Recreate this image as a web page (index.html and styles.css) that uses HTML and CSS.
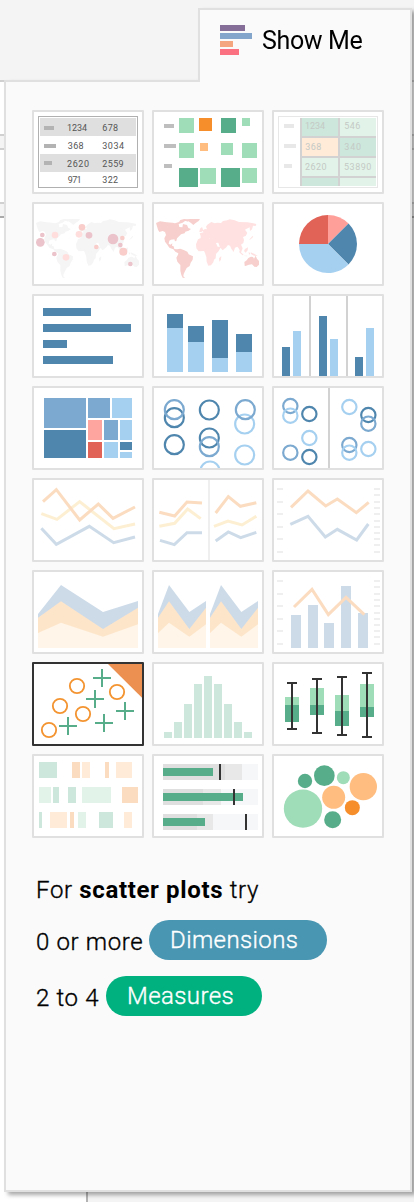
FILE: index.html
```html
<!DOCTYPE html>
<html lang="en">
<head>
<meta charset="utf-8">
<title>Show Me</title>
<link rel="stylesheet" href="styles.css">
</head>
<body>
<div class="backdrop">
  <div class="strip strip-top"></div>
  <div class="strip strip-a"></div>
  <div class="strip strip-b"></div>
  <div class="strip strip-foot"></div>
</div>
<main class="show-me">
  <header class="tab">
    <svg class="logo" viewBox="0 0 32 30"><path fill="#856f98" d="M0 0h25v6H0z"/><path fill="#83a5cc" d="M0 8h32v6H0z"/><path fill="#f4a77e" d="M0 16h13v6H0z"/><path fill="#fb7182" d="M0 24h19v6H0z"/></svg>
    <span class="title">Show Me</span>
  </header>
  <section class="body">
    <div class="grid">
      <div class="cell"><svg viewBox="30 24 324 240">
        <rect x="43.500" y="37.500" width="297" height="213" fill="#fff" stroke="#b0b0b0" stroke-width="3"/>
        <path fill="#dfdfdf" d="M48 42h288v54H48zM48 150h288v54H48z"/>
        <path fill="#b3b3b3" d="M60 66h30v12H60zM60 120h36v12H60zM60 171h24v12H60z"/>
        <g class="num"><text x="129" y="80" textLength="60">1234</text><text x="235" y="80" textLength="47">678</text><text x="131" y="134" textLength="48">368</text><text x="235" y="134" textLength="65">3034</text><text x="129" y="188" textLength="66">2620</text><text x="235" y="188" textLength="64">2559</text><text x="131" y="236" textLength="42">971</text><text x="235" y="236" textLength="47">322</text></g>
      </svg></div>
      <div class="cell"><svg viewBox="390 24 324 240">
        <path fill="#bebebe" d="M420 60h30v12h-30zM420 120h36v12h-36zM420 180h24v12h-24z"/>
        <path fill="#9fdcb8" d="M465 42h45v45h-45zM654 42h24v24h-24zM465 117h45v45h-45zM591 117h36v36h-36zM654 117h45v45h-45zM528 192h48v48h-48zM654 192h45v45h-45z"/>
        <path fill="#57ad8a" d="M591 42h45v45h-45zM465 192h57v57h-57zM591 192h57v57h-57z"/>
        <path fill="#f68e2c" d="M525 42h39v39h-39z"/><path fill="#ffbd7f" d="M528 117h24v24h-24z"/>
      </svg></div>
      <div class="cell"><svg viewBox="750 24 324 240">
        <rect x="763.500" y="37.500" width="297" height="213" fill="#fff" stroke="#e7e7e7" stroke-width="3"/>
        <path fill="#e8e8e8" d="M780 60h30v12h-30zM780 120h36v12h-36zM780 180h24v12h-24z"/>
        <path fill="#d2d2d2" d="M828 42h228v204H828z"/>
        <path fill="#cde7dc" d="M834 42h108v54H834zM948 102h108v54H948zM834 222h108v24H834z"/>
        <path fill="#e2f4e9" d="M948 42h108v54H948zM834 162h108v54H834zM948 162h108v54H948zM948 222h108v24H948z"/>
        <path fill="#ffebd8" d="M834 102h108v54H834z"/>
        <g class="num faint"><text x="843" y="75" textLength="60">1234</text><text x="961" y="75" textLength="48">546</text><text x="844" y="138" textLength="48">368</text><text x="961" y="138" textLength="50">340</text><text x="843" y="198" textLength="65">2620</text><text x="960" y="198" textLength="82">53890</text></g>
      </svg></div>

      <div class="cell"><svg viewBox="30 24 324 240">
        <g transform="translate(-360)" fill="#f5f5f5"><use href="#west"/><use href="#east"/></g>
        <g fill="#ebc3ca"><circle cx="55" cy="117" r="7"/><circle cx="49" cy="139" r="13"/><circle cx="91" cy="174" r="7"/><circle cx="195" cy="118" r="10"/><circle cx="267" cy="129" r="16"/><circle cx="289" cy="147" r="7"/><circle cx="319" cy="204" r="7"/></g>
        <g fill="#f8cdca"><circle cx="174" cy="94" r="10"/><circle cx="217" cy="153" r="7"/><circle cx="295" cy="126" r="7"/><circle cx="298" cy="167" r="12"/></g>
        <g fill="#ffdedd"><circle cx="93" cy="117" r="10"/><circle cx="126" cy="184" r="10"/><circle cx="165" cy="115" r="10"/></g>
      </svg></div>
      <div class="cell"><svg viewBox="390 24 324 240">
        <defs>
          <path id="west" d="M396 81l12-5 20 3 18 1 7 2 12-4 4-6 11-3 12 1-9 5-7 5-12 4 2 9 9 1 2-10 12 3 4 9 8 3-7 5-10 3-2 5-11 3-8 8-4 4-2 8-4 1-2-6-10 1-5 3-2 9 5 3 6-4-1 7 5 2 2 8 8 1 10-2 12 5 9 4 4 8 13 6-1 10-6 9-3 10-9 6-5 10-4 8-1 7 5 5-7-1-4-8-3-13v-17l-9-10-3-12 5-9 1-4-9-5-6-7-12-5-6-9-7-9-2-10 5-10-3-9-7-3-10 3-4-7zM488 70l10-1h30l-4 6-9 6-7 6-7-6-8-5-5 1zM661 198l7-5 5-7 8-4 6 1 3 5 5-9 4 9 6 7v11l-7 7-7-1-7-7-9 1-11 4-2-1z"/>
          <path id="east" d="M522 130l13-6 14-1 4 5 17 2 6 11 5 11 10 1-7 12-8 9-1 13-5 4-2 8-7 9-8 1-5-12-1-14-4-12-3-6-16 1-7-9-1-12zM530 120l-3-8 12-3-4-5 8-5 6 1-3-8 4-6 12-8 10 4 8-2 11 1 6-6 13-2 7-3 15 3 13 5 25 1 18 3 9 2-2 6-8-1-3 11-6 5-1-11-9 4-5 3 7 10-5 9-8 3 3 9-2 9-7 5 5 11-3 7-3 8-5-14-5-6-7 3-4 13-7-10-4-9-6-2-5 7-11 9-8-9-5-14-8 1-5-7-5 2-9-9 2 9-9-6-6 5-4 5-9 2zM528 98l6-5 4 10-6 5h-6zM585 187l7-7-1 11-5 6zM685 120l3 2-8 8-5 1 6-6zM644 164l9 6 6 7-3 1-9-8zM663 159l9-5-1 9-6 7-5-5zM674 168l5 4-4 5zM680 169l12 5 9 6-11-1-9-5zM660 179l10 0 0 2-9-1z"/>
        </defs>
        <use href="#east" fill="#ffe1e1"/><use href="#west" fill="#f7d0cd"/>
      </svg></div>
      <div class="cell"><svg viewBox="750 24 324 240">
        <path fill="#e16257" d="M912 144h-87a87 87 0 0 1 87-87z"/><path fill="#ff9f9a" d="M912 144V57a87 87 0 0 1 61.500 25.500z"/><path fill="#4f86ae" d="M912 144l61.500-61.500a87 87 0 0 1 0 123z"/><path fill="#a6d0f0" d="M912 144l61.500 61.500A87 87 0 0 1 825 144z"/>
      </svg></div>

      <div class="cell"><svg viewBox="30 24 324 240"><path fill="#4f86ae" d="M57 60h144v24H57zM57 108h264v24H57zM57 156h72v24H57zM57 204h210v24H57z"/></svg></div>
      <div class="cell"><svg viewBox="390 24 324 240"><path fill="#4f86ae" d="M429 78h48v42h-48zM492 114h48v48h-48zM564 96h48v114h-48zM636 138h48v54h-48z"/><path fill="#a6d0f0" d="M429 120h48v132h-48zM492 162h48v90h-48zM564 210h48v42h-48zM636 192h48v60h-48z"/></svg></div>
      <div class="cell"><svg viewBox="750 24 324 240"><path fill="#d2d2d2" d="M855 24h6v240h-6zM966 24h6v240h-6z"/><path fill="#4f86ae" d="M774 177h24v87h-24zM885 84h24v180h-24zM993 207h24v57h-24z"/><path fill="#a6d0f0" d="M807 129h24v135h-24zM918 153h24v111h-24zM1026 120h24v144h-24z"/></svg></div>

      <div class="cell"><svg viewBox="30 24 324 240"><path fill="#7ba9cf" d="M60 54h126v90H60zM192 54h66v60h-66zM240 120h42v60h-42z"/><path fill="#4f86ae" d="M60 150h126v84H60zM288 186h36v24h-36z"/><path fill="#a6d0f0" d="M264 54h60v60h-60zM288 120h36v60h-36zM240 186h42v48h-42zM288 216h36v18h-36z"/><path fill="#ffa59f" d="M192 120h42v60h-42z"/><path fill="#e16257" d="M192 186h42v48h-42z"/></svg></div>
      <div class="cell"><svg viewBox="390 24 324 240" fill="none" stroke-width="6.500">
        <g stroke="#4f86ae"><circle cx="451" cy="113" r="28.500"/><circle cx="451" cy="194" r="28.500"/><circle cx="556" cy="90" r="28.500"/><circle cx="556" cy="174" r="28.500"/></g>
        <g stroke="#a6d0f0"><circle cx="662" cy="132" r="28.500"/><circle cx="662" cy="225" r="28.500"/><circle cx="558" cy="273" r="28.500"/></g>
        <g stroke="#7ba9cf"><circle cx="451" cy="89" r="28.500"/><circle cx="556" cy="200" r="28.500"/><circle cx="664" cy="89" r="28.500"/></g>
      </svg></div>
      <div class="cell"><svg viewBox="750 24 324 240" fill="none" stroke-width="6.500">
        <path fill="#d2d2d2" d="M912 24h6v240h-6z"/>
        <g stroke="#4f86ae"><circle cx="856" cy="102" r="21.500"/><circle cx="856" cy="231" r="21.500"/><circle cx="1033" cy="105" r="21.500"/></g>
        <g stroke="#7ba9cf"><circle cx="799" cy="78" r="21.500"/><circle cx="799" cy="218" r="21.500"/><circle cx="1033" cy="131" r="21.500"/><circle cx="976" cy="195" r="21.500"/></g>
        <g stroke="#a6d0f0"><circle cx="799" cy="107" r="21.500"/><circle cx="856" cy="174" r="21.500"/><circle cx="976" cy="81" r="21.500"/><circle cx="976" cy="218" r="21.500"/><circle cx="1033" cy="207" r="21.500"/></g>
      </svg></div>

      <div class="cell"><svg class="lines" viewBox="30 24 324 240"><path stroke="#fdefd2" d="M52 125l47 17 68-53 103 81 63-14"/><path stroke="#fbdcc0" d="M57 89l40-36 70 91 56-48 44 43 66-34"/><path stroke="#cddbe9" d="M52 169l45 48 99-54 73 49 64-17"/></svg></div>
      <div class="cell"><svg class="lines" viewBox="390 24 324 240"><path fill="#efefef" d="M552 24h6v240h-6z"/><path stroke="#fdefd2" d="M406 163l46-9 39-43 39 29M570 163l42-16 42 12 43-26"/><path stroke="#fbdcc0" d="M406 121l46 11 37-42 45 3M575 123l38-49 36 29 48-11"/><path stroke="#cddbe9" d="M408 205l43 13 38-36h45M575 207l38-27 37 17 47-16"/></svg></div>
      <div class="cell"><svg class="lines" viewBox="750 24 324 240"><path id="ticks" stroke="#efefef" stroke-width="6" d="M759 51h18M759 90h18M759 126h18M759 165h18M759 201h18M759 240h18M1050 51h18M1050 69h18M1050 90h18M1050 108h18M1050 126h18M1050 147h18M1050 165h18M1050 183h18M1050 201h18M1050 219h18M1050 240h18"/><path stroke="#fbdcc0" d="M801 106l51-49 53 45 35-21 57 41 37-31"/><path stroke="#cddbe9" d="M799 157l53-24 52 62 36-23 58 32 35-48"/></svg></div>

      <div class="cell"><svg viewBox="30 24 324 240"><path fill="#cddbe9" d="M42 150l69-87 126 81 105-33v141H42z"/><path fill="#fde5ca" d="M42 161l69-49 126 83 105-64v121H42z"/><path fill="#fff5e8" d="M42 207l69-31 126 42 105-37v71H42z"/></svg></div>
      <div class="cell"><svg viewBox="390 24 324 240"><g id="areas"><path fill="#cddbe9" d="M402 150l33-87 61 81 50-33v141H402z"/><path fill="#fde5ca" d="M402 161l33-49 61 83 50-64v121H402z"/><path fill="#fff5e8" d="M402 207l33-31 61 42 50-37v71H402z"/></g><use href="#areas" x="156"/></svg></div>
      <div class="cell"><svg class="lines" viewBox="750 24 324 240"><use href="#ticks"/><path fill="#cddbe9" d="M801 153h30v99h-30zM852 123h30v129h-30zM900 177h30v75h-30zM951 66h30v186h-30zM1002 147h30v105h-30z"/><path stroke="#fbdcc0" d="M810 129l54-53 49 76 53-52 55 52"/></svg></div>

      <div class="cell selected"><svg viewBox="30 24 324 240" fill="none"><path fill="#eb9050" d="M252 24h102v101z"/><g stroke="#f39431" stroke-width="5.500"><circle cx="159" cy="90" r="21.500"/><circle cx="108" cy="150" r="21.500"/><circle cx="177" cy="174" r="21.500"/><circle cx="75" cy="222" r="21.500"/><circle cx="279" cy="108" r="21.500"/></g><path stroke="#57ad8a" stroke-width="6" d="M207 66h54M234 39v54M186 129h54M213 102v54M276 165h54M303 138v54M213 201h54M240 174v54M105 210h54M132 183v54"/></svg></div>
      <div class="cell"><svg viewBox="390 24 324 240"><path fill="#cde7dc" d="M420 228h24v18h-24zM450 198h24v48h-24zM480 144h24v102h-24zM510 84h24v162h-24zM540 60h24v186h-24zM570 84h24v162h-24zM600 144h24v102h-24zM630 198h24v48h-24zM660 228h24v18h-24z"/></svg></div>
      <div class="cell"><svg viewBox="750 24 324 240"><path fill="#9fdcb8" d="M783 123h42v24h-42zM858 96h42v51h-42zM933 117h42v48h-42zM1008 84h42v69h-42z"/><path fill="#57ad8a" d="M783 147h42v51h-42zM858 147h42v30h-42zM933 165h42v45h-42zM1008 153h42v30h-42z"/><path stroke="#333" stroke-width="6" fill="none" d="M789 81h30M789 219h30M804 81v138M864 69h30M864 231h30M879 69v162M939 63h30M939 237h30M954 63v174M1014 51h30M1014 243h30M1029 51v192"/></svg></div>

      <div class="cell"><svg viewBox="30 24 324 240"><path fill="#cde7dc" d="M45 42h54v48H45zM87 117h18v48H87zM132 117h24v48h-24zM45 192h9v48h-9zM225 192h42v48h-42z"/><path fill="#fbdcc0" d="M144 42h24v48h-24zM243 42h12v48h-12zM294 117h48v48h-48zM138 192h12v48h-12z"/><path fill="#ffebd8" d="M174 42h24v48h-24zM276 42h48v48h-48zM78 192h51v48H78zM300 192h24v48h-24z"/><path fill="#e2f4e9" d="M45 117h36v48H45zM174 117h87v48h-87zM162 192h24v48h-24z"/></svg></div>
      <div class="cell"><svg viewBox="390 24 324 240"><path fill="#f5f7f9" d="M417 48h285v48H417zM417 123h285v48H417zM417 198h285v48H417z"/><path fill="#e8e8e8" d="M417 48h237v48H417zM417 123h174v48H417zM417 198h150v48H417z"/><path fill="#dfdfdf" d="M417 48h186v48H417zM417 123h120v48H417zM417 198h102v48H417z"/><path fill="#57ad8a" d="M417 60h150v24H417zM417 135h240v24H417zM417 210h126v24H417z"/><path fill="#333" d="M585 48h6v48h-6zM627 123h6v48h-6zM663 198h6v48h-6z"/></svg></div>
      <div class="cell"><svg viewBox="750 24 324 240"><g fill="#57ad8a"><circle cx="843" cy="99" r="21.500"/><circle cx="901" cy="83" r="31"/><circle cx="926" cy="215" r="25.500"/></g><g fill="#9fdcb8"><circle cx="958" cy="89" r="19.500"/><circle cx="837" cy="182" r="57.500"/></g><g fill="#ffbd7f"><circle cx="1018" cy="116" r="41"/><circle cx="929" cy="148" r="34.500"/></g><circle cx="985" cy="179" r="22.500" fill="#f68e2c"/></svg></div>
    </div>
    <div class="hints">
      <p class="hint"><span class="w-for">For <b>scatter plots</b> try</span></p>
      <p class="hint"><span class="w-zero">0 or more</span><span class="pill dimensions">Dimensions</span></p>
      <p class="hint"><span class="w-two">2 to 4</span><span class="pill measures">Measures</span></p>
    </div>
  </section>
</main>
</body>
</html>
```
FILE: styles.css
```css
* { box-sizing: border-box; }

body {
  margin: 0;
  width: 414px;
  height: 1202px;
  overflow: hidden;
  position: relative;
  background: #fff;
  color: #000;
  font-family: Roboto, "Liberation Sans", sans-serif;
}

/* Worksheet edges visible behind the panel */
.backdrop {
  position: absolute;
  inset: 0;
  display: flex;
  flex-direction: column;
}
.strip { flex: none; }
.strip-top { height: 82px; background: #f4f4f4; border-bottom: 2px solid #d0d0d0; }
.strip-a { height: 16px; margin-top: 52px; background: #f4f4f4; border: solid #d0d0d0; border-width: 2px 0; }
.strip-b { height: 16px; margin-top: 52px; background: #f4f4f4; border-top: 2px solid #d0d0d0; border-bottom: 2px solid #aaa; }
.strip-foot { flex: 1; margin-left: 86px; background: #f4f4f4; border-left: 2px solid #b3b3b3; }

.show-me {
  position: relative;
  width: 408px;
  height: 1192px;
  margin-left: 4px;
  padding-top: 8px;
  display: flex;
  flex-direction: column;
  filter: drop-shadow(4px 3px 2px rgba(0, 0, 0, .34));
}

.tab {
  position: relative;
  z-index: 1;
  align-self: flex-end;
  width: 214px;
  height: 74px;
  margin-bottom: -2px;
  padding: 15px 0 0 20px;
  display: flex;
  align-items: flex-start;
  gap: 10px;
  background: #fafafa;
  border: solid #e0e0e0;
  border-width: 2px 2px 0;
}
.logo { width: 32px; height: 30px; }
.title { font-size: 25px; font-weight: 400; line-height: 31px; letter-spacing: -.35px; }

.body {
  flex: 1;
  padding: 28px 26px 0;
  background: #fafafa;
  border: 2px solid #e0e0e0;
}

.grid {
  display: grid;
  grid-template-columns: repeat(3, 112px);
  grid-auto-rows: 84px;
  gap: 8px;
}
.cell {
  background: #fff;
  border: 2px solid #e0e0e0;
  border-radius: 1px;
}
.cell svg { display: block; width: 108px; height: 80px; }
.selected { border-color: #333; }

.lines { fill: none; stroke-width: 9px; }
.num { font: 400 27px Roboto, sans-serif; fill: #555; }
.faint { fill: #c4c9c5; }

.hints {
  display: flex;
  flex-direction: column;
  gap: 16px;
  padding: 34px 0 0 4px;
}
.hint {
  margin: 0;
  height: 40px;
  display: flex;
  gap: 6px;
  font-size: 24px;
  font-weight: 300;
  line-height: 45px;
  letter-spacing: .65px;
  white-space: nowrap;
  -webkit-text-stroke: .35px currentColor;
}
.hint:first-child { height: 32px; line-height: 32px; }
.hint b { font-weight: 700; -webkit-text-stroke: 0; }
.w-for { padding-top: 2px; }
.w-zero { width: 107px; }
.w-two { width: 64px; }
.pill {
  height: 40px;
  padding-left: 21px;
  border-radius: 20px;
  color: #fff;
  line-height: 40px;
  letter-spacing: .4px;
}
.dimensions { width: 178px; background: #4996b2; }
.measures { width: 156px; background: #00b180; }
```
